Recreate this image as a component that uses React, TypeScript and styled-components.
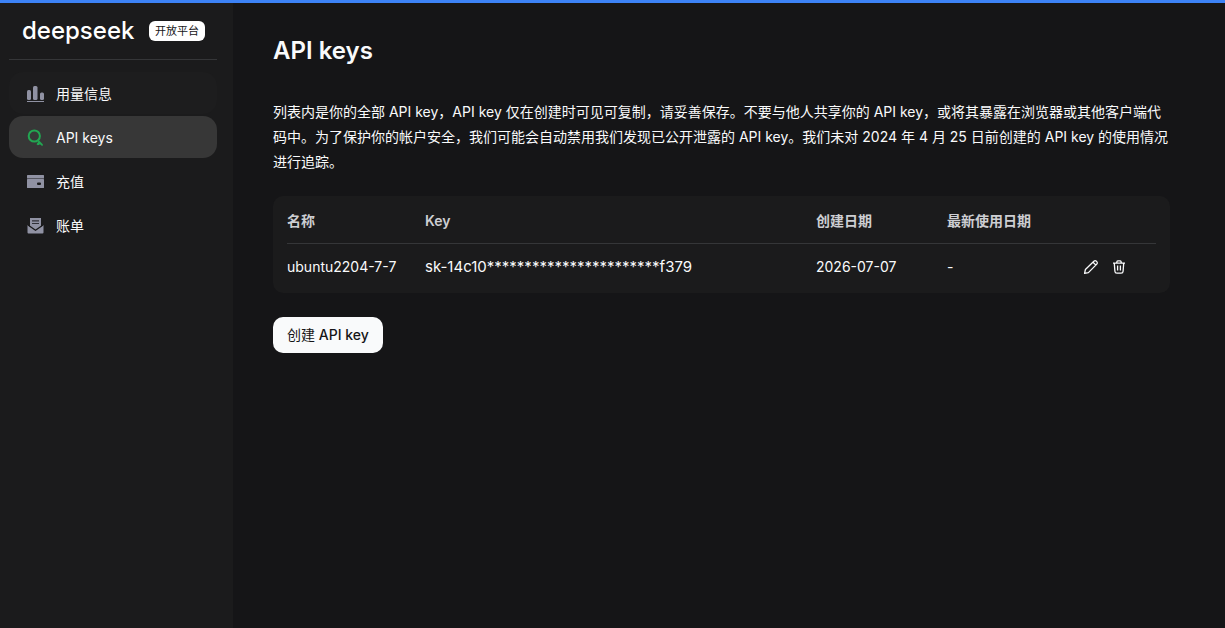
import React from "react";
import styled, { createGlobalStyle } from "styled-components";

const GlobalStyle = createGlobalStyle`
  *, *::before, *::after { box-sizing: border-box; }
  body {
    margin: 0;
    background: #151517;
    color: #f9fafb;
    font-family: Inter, "Noto Sans CJK SC", sans-serif;
    font-size: 14px;
    line-height: 20px;
  }
`;

const Page = styled.div`
  display: flex;
  min-height: 100vh;
  border-top: 3px solid #3c82f6;
`;

const Sidebar = styled.aside`
  flex: none;
  width: 233px;
  padding: 0 16px 0 9px;
  background: #1b1b1c;
`;

const Brand = styled.header`
  display: flex;
  align-items: center;
  justify-content: space-between;
  height: 57px;
  padding: 0 12px 0 13px;
  border-bottom: 1px solid #353638;
`;

const Logo = styled.a`
  color: #ffffff;
  font-size: 24px;
  font-weight: 500;
  line-height: 24px;
  text-decoration: none;
`;

const Badge = styled.span`
  padding: 0 6px;
  border-radius: 6px;
  background: #ffffff;
  color: #151517;
  font-size: 11px;
  line-height: 20px;
  white-space: nowrap;
`;

const Nav = styled.nav`
  display: flex;
  flex-direction: column;
  gap: 2px;
  padding-top: 12px;
`;

const NavItem = styled.a<{ $state?: "active" | "hover" }>`
  display: flex;
  align-items: center;
  gap: 11px;
  height: 42px;
  padding: 2px 17px 0;
  border-radius: 14px;
  background: ${({ $state }) =>
    $state === "active" ? "#373737" : $state === "hover" ? "#1d1d1e" : "transparent"};
  color: #f9fafb;
  text-decoration: none;

  svg {
    flex: none;
    color: ${({ $state }) => ($state === "active" ? "#22a652" : "#9092a3")};
  }
`;

const Main = styled.main`
  flex: 1;
  min-width: 0;
  padding: 32px 55px 40px 40px;
`;

const Title = styled.h1`
  margin: 0 0 32px;
  font-size: 24px;
  font-weight: 600;
  line-height: 32px;
`;

const Description = styled.p`
  margin: 0 0 22px;
  line-height: 25px;
`;

const Card = styled.section`
  padding: 0 14px;
  border-radius: 10px;
  background: #1b1b1c;
`;

const Table = styled.table`
  width: 100%;
  border-collapse: separate;
  border-spacing: 0;
  table-layout: fixed;
`;

const HeadCell = styled.th<{ $width?: number }>`
  width: ${({ $width }) => ($width ? `${$width}px` : "auto")};
  height: 48px;
  padding: 2px 0 0;
  border-bottom: 1px solid #353638;
  color: #cdced2;
  font-weight: 600;
  text-align: left;
`;

const Cell = styled.td`
  height: 49px;
  padding: 0 0 4px;
`;

const KeyCell = styled(Cell)`
  font-size: 15px;
`;

const Actions = styled.div`
  display: flex;
  gap: 12px;
`;

const IconButton = styled.button`
  display: flex;
  padding: 0;
  border: 0;
  background: none;
  color: #f9fafb;
  cursor: pointer;
`;

const CreateButton = styled.button`
  margin-top: 24px;
  height: 36px;
  padding: 0 14px;
  border: 0;
  border-radius: 10px;
  background: #f9fafb;
  color: #151517;
  font: 500 14px/20px Inter, "Noto Sans CJK SC", sans-serif;
  cursor: pointer;
`;

const Regular = styled.span`
  font-weight: 400;
`;

const UsageIcon = () => (
  <svg width="19" height="20" viewBox="0 0 19 20" fill="currentColor" aria-hidden="true">
    <rect x="1" y="6" width="4" height="10" rx="1.5" />
    <rect x="7" y="2" width="4.5" height="14" rx="1.5" />
    <rect x="14" y="8.5" width="4" height="7.5" rx="1.5" />
    <rect x="1" y="17" width="17" height="1" />
  </svg>
);

const KeyIcon = () => (
  <svg width="19" height="20" viewBox="0 0 19 20" fill="none" stroke="currentColor" strokeWidth="2" aria-hidden="true">
    <circle cx="8.3" cy="8" r="5.6" />
    <path d="M11.8 12.2l4.4 4.6M13.4 13.5l-2.2 3.2M16.6 17.5l-3-2.7-1.3 2" strokeWidth="1.6" />
  </svg>
);

const WalletIcon = () => (
  <svg width="19" height="20" viewBox="0 0 19 20" aria-hidden="true">
    <rect x="1" y="3" width="17" height="3" rx="0.5" fill="currentColor" />
    <rect x="1" y="6" width="17" height="1" fill="#55565f" />
    <rect x="1" y="7" width="17" height="9" rx="0.5" fill="currentColor" />
    <rect x="11" y="10.5" width="4" height="2.5" rx="1" fill="#1b1b1c" />
  </svg>
);

const BillIcon = () => (
  <svg width="19" height="20" viewBox="0 0 19 20" aria-hidden="true">
    <path d="M4 2h11v8.5l-5.500 4L4 10.500z" fill="currentColor" />
    <path d="M6 4.800h7M6 7.500h7" stroke="#303138" strokeWidth="1.2" />
    <path d="M1.500 9l8 5.500 8-5.500v7.500a1 1 0 0 1-1 1h-14a1 1 0 0 1-1-1z" fill="currentColor" />
    <path d="M2 9l7.500 5.200L17 9" fill="none" stroke="#1b1b1c" strokeWidth="1.3" />
  </svg>
);

const EditIcon = () => (
  <svg width="16" height="16" viewBox="0 0 16 16" fill="none" stroke="currentColor" strokeWidth="1.3" strokeLinejoin="round" aria-hidden="true">
    <path d="M1.6 14.4l.8-3.9 8.5-8.3a1.8 1.8 0 0 1 2.5 0l.4.4a1.8 1.8 0 0 1 0 2.5l-8.4 8.5-3.8.8zM10 3.2l2.9 2.9" />
  </svg>
);

const TrashIcon = () => (
  <svg width="16" height="16" viewBox="0 0 16 16" fill="none" stroke="currentColor" strokeWidth="1.3" strokeLinejoin="round" aria-hidden="true">
    <path d="M2 4.1h12M5.6 4l.5-1.7a.8.8 0 0 1 .7-.5h2.4a.8.8 0 0 1 .7.5l.5 1.7M3.3 4.2l.6 8a2 2 0 0 0 2 1.9h4.2a2 2 0 0 0 2-1.9l.6-8M6.6 6.5v5M9.4 6.5v5" />
  </svg>
);

const navItems = [
  { label: "用量信息", icon: <UsageIcon />, state: "hover" as const },
  { label: "API keys", icon: <KeyIcon />, state: "active" as const },
  { label: "充值", icon: <WalletIcon /> },
  { label: "账单", icon: <BillIcon /> },
];

const keys = [
  { name: "ubuntu2204-7-7", key: "sk-14c10***********************f379", created: "2026-07-07", used: "-" },
];

export default function App() {
  return (
    <>
      <GlobalStyle />
      <Page lang="zh-CN">
        <Sidebar>
          <Brand>
            <Logo href="#">deepseek</Logo>
            <Badge>开放平台</Badge>
          </Brand>
          <Nav>
            {navItems.map((item) => (
              <NavItem
                key={item.label}
                href="#"
                $state={item.state}
                aria-current={item.state === "active" ? "page" : undefined}
              >
                {item.icon}
                {item.label}
              </NavItem>
            ))}
          </Nav>
        </Sidebar>
        <Main>
          <Title>API keys</Title>
          <Description>
            列表内是你的全部 API key，API key 仅在创建时可见可复制，请妥善保存。不要与他人共享你的 API
            key，或将其暴露在浏览器或其他客户端代码中。为了保护你的帐户安全，我们可能会自动禁用我们发现已公开泄露的 API
            key。我们未对 2024 年 4 月 25 日前创建的 API key 的使用情况进行追踪。
          </Description>
          <Card>
            <Table>
              <thead>
                <tr>
                  <HeadCell $width={138}>名称</HeadCell>
                  <HeadCell>Key</HeadCell>
                  <HeadCell $width={131}>创建日期</HeadCell>
                  <HeadCell $width={136}>最新使用日期</HeadCell>
                  <HeadCell $width={73} aria-label="操作" />
                </tr>
              </thead>
              <tbody>
                {keys.map((row) => (
                  <tr key={row.name}>
                    <Cell>{row.name}</Cell>
                    <KeyCell>{row.key}</KeyCell>
                    <Cell>{row.created}</Cell>
                    <Cell>{row.used}</Cell>
                    <Cell>
                      <Actions>
                        <IconButton type="button" aria-label="编辑">
                          <EditIcon />
                        </IconButton>
                        <IconButton type="button" aria-label="删除">
                          <TrashIcon />
                        </IconButton>
                      </Actions>
                    </Cell>
                  </tr>
                ))}
              </tbody>
            </Table>
          </Card>
          <CreateButton type="button">
            <Regular>创建</Regular> API key
          </CreateButton>
        </Main>
      </Page>
    </>
  );
}
